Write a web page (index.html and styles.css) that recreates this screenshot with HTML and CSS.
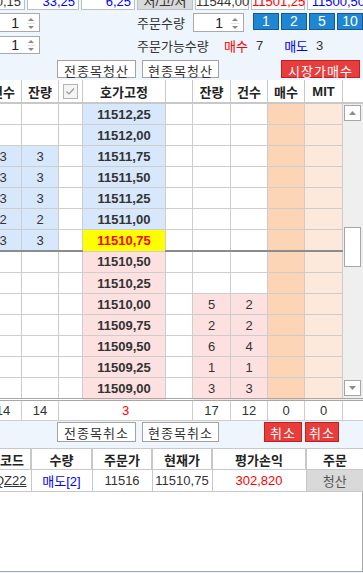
FILE: index.html
```html
<!DOCTYPE html>
<html lang="ko">
<head>
    <meta charset="UTF-8">
    <title>호가주문</title>
    <link rel="stylesheet" href="styles.css">
</head>
<body>
    <div class="ticker">
        <div class="tk w53">0,15</div>
        <div class="tk w52 blue">33,25</div>
        <div class="tk w54 blue">6,25</div>
        <div class="tk w56 grey">저/고/저</div>
        <div class="tk w54">11544,00</div>
        <div class="tk w54 red">11501,25</div>
        <div class="tk w62 blue">11500,50</div>
    </div>

    <div class="ctl-row row-qty">
        <div class="spin spin-left"><span class="val">1</span><svg class="arr" width="8" height="14"><polygon points="1,5 4,2 7,5" fill="#8a8a8a"/><line x1="0" y1="7.5" x2="8" y2="7.5" stroke="#e2e2e2"/><polygon points="1,10 4,13 7,10" fill="#8a8a8a"/></svg></div>
        <span class="label">주문수량</span>
        <div class="spin spin-right"><span class="val">1</span><svg class="arr" width="8" height="14"><polygon points="1,5 4,2 7,5" fill="#8a8a8a"/><line x1="0" y1="7.5" x2="8" y2="7.5" stroke="#e2e2e2"/><polygon points="1,10 4,13 7,10" fill="#8a8a8a"/></svg></div>
        <div class="qbtns">
            <button class="qbtn">1</button>
            <button class="qbtn">2</button>
            <button class="qbtn">5</button>
            <button class="qbtn">10</button>
        </div>
    </div>

    <div class="ctl-row row-avail">
        <div class="spin spin-left"><span class="val">1</span><svg class="arr" width="8" height="14"><polygon points="1,5 4,2 7,5" fill="#8a8a8a"/><line x1="0" y1="7.5" x2="8" y2="7.5" stroke="#e2e2e2"/><polygon points="1,10 4,13 7,10" fill="#8a8a8a"/></svg></div>
        <span class="label">주문가능수량</span>
        <span class="avail buy">매수</span><span class="avail-n n-buy">7</span>
        <span class="avail sell">매도</span><span class="avail-n n-sell">3</span>
    </div>

    <div class="ctl-row row-btns">
        <button class="wbtn b-all">전종목청산</button>
        <button class="wbtn b-cur">현종목청산</button>
        <button class="rbtn b-mkt">시장가매수</button>
    </div>

    <table class="hoga">
        <colgroup>
            <col class="c-cnt"><col class="c-rem"><col class="c-chk"><col class="c-price"><col class="c-blank">
            <col class="c-rem2"><col class="c-cnt2"><col class="c-buy"><col class="c-mit"><col class="c-scroll">
        </colgroup>
        <thead>
            <tr>
                <th>건수</th><th>잔량</th>
                <th><svg width="15" height="15"><rect x="0.5" y="0.5" width="14" height="14" fill="#f4f4f4" stroke="#b4b4b4"/><polyline points="3.5,7.5 6,10 11,4.5" fill="none" stroke="#9a9a9a" stroke-width="1.2"/></svg></th>
                <th>호가고정</th><th></th>
                <th>잔량</th><th>건수</th><th>매수</th><th>MIT</th><th class="th-end"></th>
            </tr>
        </thead>
        <tbody>
            <tr>
                <td></td><td></td><td></td><td class="price ask">11512,25</td><td></td>
                <td></td><td></td><td class="buycol"></td><td class="mitcol"></td>
                <td class="scroll" rowspan="14">
                    <div class="sbar">
                        <div class="sbtn"><svg width="7" height="4"><polygon points="0,4 3.5,0 7,4" fill="#8c8c8c"/></svg></div>
                        <div class="track-top"></div>
                        <div class="thumb"></div>
                        <div class="track-bottom"></div>
                        <div class="sbtn"><svg width="7" height="4"><polygon points="0,0 3.5,4 7,0" fill="#8c8c8c"/></svg></div>
                    </div>
                </td>
            </tr>
            <tr>
                <td></td><td></td><td></td><td class="price ask">11512,00</td><td></td>
                <td></td><td></td><td class="buycol"></td><td class="mitcol"></td>
            </tr>
            <tr>
                <td class="askq">3</td><td class="askq">3</td><td></td><td class="price ask">11511,75</td><td></td>
                <td></td><td></td><td class="buycol"></td><td class="mitcol"></td>
            </tr>
            <tr>
                <td class="askq">3</td><td class="askq">3</td><td></td><td class="price ask">11511,50</td><td></td>
                <td></td><td></td><td class="buycol"></td><td class="mitcol"></td>
            </tr>
            <tr>
                <td class="askq">3</td><td class="askq">3</td><td></td><td class="price ask">11511,25</td><td></td>
                <td></td><td></td><td class="buycol"></td><td class="mitcol"></td>
            </tr>
            <tr>
                <td class="askq">2</td><td class="askq">2</td><td></td><td class="price ask">11511,00</td><td></td>
                <td></td><td></td><td class="buycol"></td><td class="mitcol"></td>
            </tr>
            <tr class="split">
                <td class="askq">3</td><td class="askq">3</td><td></td><td class="price cur">11510,75</td><td></td>
                <td></td><td></td><td class="buycol"></td><td class="mitcol"></td>
            </tr>
            <tr>
                <td></td><td></td><td></td><td class="price bid">11510,50</td><td></td>
                <td></td><td></td><td class="buycol"></td><td class="mitcol"></td>
            </tr>
            <tr>
                <td></td><td></td><td></td><td class="price bid">11510,25</td><td></td>
                <td></td><td></td><td class="buycol"></td><td class="mitcol"></td>
            </tr>
            <tr>
                <td></td><td></td><td></td><td class="price bid">11510,00</td><td></td>
                <td class="bidq">5</td><td class="bidq">2</td><td class="buycol"></td><td class="mitcol"></td>
            </tr>
            <tr>
                <td></td><td></td><td></td><td class="price bid">11509,75</td><td></td>
                <td class="bidq">2</td><td class="bidq">2</td><td class="buycol"></td><td class="mitcol"></td>
            </tr>
            <tr>
                <td></td><td></td><td></td><td class="price bid">11509,50</td><td></td>
                <td class="bidq">6</td><td class="bidq">4</td><td class="buycol"></td><td class="mitcol"></td>
            </tr>
            <tr>
                <td></td><td></td><td></td><td class="price bid">11509,25</td><td></td>
                <td class="bidq">1</td><td class="bidq">1</td><td class="buycol"></td><td class="mitcol"></td>
            </tr>
            <tr>
                <td></td><td></td><td></td><td class="price bid">11509,00</td><td></td>
                <td class="bidq">3</td><td class="bidq">3</td><td class="buycol"></td><td class="mitcol"></td>
            </tr>
        </tbody>
        <tfoot>
            <tr>
                <td>14</td><td>14</td><td colspan="3" class="diff">3</td>
                <td>17</td><td>12</td><td>0</td><td>0</td><td></td>
            </tr>
        </tfoot>
    </table>

    <div class="ctl-row row-cancel">
        <button class="wbtn b-all">전종목취소</button>
        <button class="wbtn b-cur">현종목취소</button>
        <button class="rbtn b-c1">취소</button>
        <button class="rbtn b-c2">취소</button>
    </div>

    <div class="orders">
        <table class="olist">
            <colgroup>
                <col class="o-code"><col class="o-qty"><col class="o-price"><col class="o-now"><col class="o-pl"><col class="o-act">
            </colgroup>
            <thead>
                <tr><th>종목코드</th><th>수량</th><th>주문가</th><th>현재가</th><th>평가손익</th><th>주문</th></tr>
            </thead>
            <tbody>
                <tr>
                    <td class="code">NQZ22</td>
                    <td class="sell">매도[2]</td>
                    <td>11516</td>
                    <td>11510,75</td>
                    <td class="red">302,820</td>
                    <td class="close">청산</td>
                </tr>
            </tbody>
        </table>
    </div>
</body>
</html>
```

FILE: styles.css
```css
body {
    margin: 0;
    width: 363px;
    height: 573px;
    overflow: hidden;
    background: #eef5fd;
    font-family: "Liberation Sans", "Noto Sans CJK KR", sans-serif;
    font-size: 12px;
    color: #333;
}
button {
    font-family: "Liberation Sans", "Noto Sans CJK KR", sans-serif;
    padding: 0;
    cursor: pointer;
}

/* top ticker, cut off by the window */
.ticker {
    display: flex;
    gap: 2px;
    height: 10px;
    align-items: flex-end;
    overflow: hidden;
    margin-left: -28px;
}
.tk {
    flex: none;
    box-sizing: border-box;
    height: 20px;
    padding: 4px 3px 0 0;
    line-height: 14px;
    font-size: 13px;
    text-align: right;
    background: #fff;
    border: 1px solid #b8c0c8;
}
.tk.grey {
    background: #d9d9d9;
    text-align: center;
    padding-right: 0;
}
.tk.blue { color: #0000ff; }
.tk.red { color: #ff0000; }
.w52 { width: 52px; }
.w53 { width: 53px; }
.w54 { width: 54px; }
.w56 { width: 56px; }
.w62 { width: 62px; }

/* order controls */
.ctl-row {
    display: flex;
    align-items: center;
}
.row-qty {
    margin-top: 3px;
    height: 19px;
}
.row-avail {
    margin-top: 4px;
    height: 18px;
}
.row-btns {
    margin-top: 6px;
    height: 17px;
}
.spin {
    box-sizing: border-box;
    display: flex;
    align-items: center;
    justify-content: flex-end;
    height: 100%;
    background: #fff;
    border: 1px solid #a9a9a9;
    font-size: 14px;
    color: #222;
}
.spin .val {
    margin-right: 8px;
}
.spin .arr {
    margin-right: 4px;
}
.spin-left {
    width: 51px;
    margin-left: -11px;
}
.spin-right {
    width: 51px;
}
.label {
    width: 56px;
    margin-left: 97px;
    font-size: 13px;
    white-space: nowrap;
}
.qbtns {
    display: flex;
    gap: 2px;
    margin-left: 9px;
    height: 17px;
    align-self: flex-start;
}
.qbtn {
    width: 26px;
    height: 17px;
    background: #1e86d2;
    border: 1px solid #1a5790;
    color: #fff;
    font-size: 14px;
    line-height: 15px;
}
.avail {
    font-size: 13px;
}
.avail.buy {
    margin-left: 31px;
    color: #ff0000;
}
.avail.sell {
    margin-left: 21px;
    color: #0000ff;
}
.avail-n {
    font-size: 13px;
    margin-left: 8px;
}
.wbtn {
    box-sizing: border-box;
    height: 18px;
    background: #fff;
    border: 1px solid #a2a2a2;
    color: #333;
    font-size: 13px;
    letter-spacing: 1px;
}
.rbtn {
    box-sizing: border-box;
    height: 18px;
    background: #e83d3d;
    border: 1px solid #c21f1f;
    color: #fff;
    font-size: 13px;
    letter-spacing: 1px;
}
.b-all {
    width: 79px;
    margin-left: 57px;
}
.b-cur {
    width: 77px;
    margin-left: 6px;
}
.b-mkt {
    width: 79px;
    margin-left: 62px;
}

/* hoga grid */
.hoga {
    margin-top: 3px;
    margin-left: -16px;
    border-collapse: collapse;
    table-layout: fixed;
    width: 379px;
    background: #fff;
}
.c-cnt { width: 37px; }
.c-rem { width: 37px; }
.c-chk { width: 24px; }
.c-price { width: 83px; }
.c-blank { width: 27px; }
.c-rem2 { width: 38px; }
.c-cnt2 { width: 37px; }
.c-buy { width: 37px; }
.c-mit { width: 38px; }
.c-scroll { width: 21px; }
.hoga th {
    height: 22px;
    padding: 0;
    font-size: 13px;
    font-weight: bold;
    color: #222;
    border-left: 1px solid #c8c8c8;
    border-bottom: 2px solid #c8c8c8;
    background: #fff;
    white-space: nowrap;
}
.hoga th svg {
    display: block;
    margin: 0 auto;
}
.hoga th.th-end {
    border-left: 1px solid #c8c8c8;
}
.hoga td {
    height: 20px;
    padding: 0;
    text-align: center;
    font-size: 13px;
    color: #333;
    border: 1px solid #cdcdcd;
}
.hoga td.price {
    font-weight: bold;
    font-size: 13px;
    color: #333;
}
.hoga td.ask,
.hoga td.askq {
    background: #d7e8fc;
}
.hoga td.bid,
.hoga td.bidq {
    background: #fde1e1;
}
.hoga td.cur {
    background: #ffff00;
    color: #ff0000;
}
.hoga td.buycol {
    background: #fbd5b5;
}
.hoga td.mitcol {
    background: #fde9dc;
}
.hoga tr.split td {
    border-bottom: 2px solid #8c8c8c;
}
.hoga tr.split td.price {
    border-bottom: 1px solid #cdcdcd;
}
.hoga tfoot td {
    height: 19px;
    border-top: 3px double #a8a8a8;
    background: #fff;
}
.hoga tfoot td.diff {
    color: #ff0000;
}
.hoga td.scroll {
    background: #efefef;
    vertical-align: top;
    padding: 1px 2px 1px 1px;
}
.sbar {
    display: flex;
    flex-direction: column;
    height: 291px;
}
.sbtn {
    box-sizing: border-box;
    height: 16px;
    display: flex;
    align-items: center;
    justify-content: center;
    background: #fff;
    border: 1px solid #a6a6a6;
}
.track-top {
    height: 106px;
}
.thumb {
    box-sizing: border-box;
    height: 40px;
    background: #fff;
    border: 1px solid #a6a6a6;
}
.track-bottom {
    flex: 1;
}

.row-cancel {
    margin-top: 1px;
    height: 20px;
}
.row-cancel .wbtn {
    height: 20px;
}
.row-cancel .rbtn {
    height: 20px;
}
.b-c1 {
    width: 38px;
    margin-left: 45px;
}
.b-c2 {
    width: 34px;
    margin-left: 3px;
}

/* order list */
.orders {
    box-sizing: border-box;
    margin-top: 6px;
    margin-left: -32px;
    width: 395px;
    height: 124px;
    background: #fff;
    border-right: 1px solid #a8a8a8;
    border-bottom: 1px solid #a8a8a8;
    border-top: 1px solid #c8c8c8;
}
.olist {
    border-collapse: collapse;
    table-layout: fixed;
    width: 394px;
}
.o-code { width: 62px; }
.o-qty { width: 61px; }
.o-price { width: 60px; }
.o-now { width: 60px; }
.o-pl { width: 94px; }
.o-act { width: 57px; }
.olist th {
    height: 20px;
    padding: 0;
    font-size: 13px;
    font-weight: bold;
    color: #222;
    background: #fff;
    border-left: 2px solid #c8c8c8;
    border-bottom: 1px solid #c8c8c8;
    text-align: center;
    white-space: nowrap;
    overflow: hidden;
}
.olist td {
    height: 21px;
    padding: 0;
    font-size: 13px;
    text-align: center;
    border-left: 1px solid #c8c8c8;
    border-bottom: 1px solid #c8c8c8;
    white-space: nowrap;
}
.olist td.code {
    text-align: right;
    padding-right: 4px;
    text-decoration: underline;
}
.olist td.sell {
    color: #0000ff;
}
.olist td.red {
    color: #ff0000;
}
.olist td.close {
    background: #d9d9d9;
    color: #555;
}
```
